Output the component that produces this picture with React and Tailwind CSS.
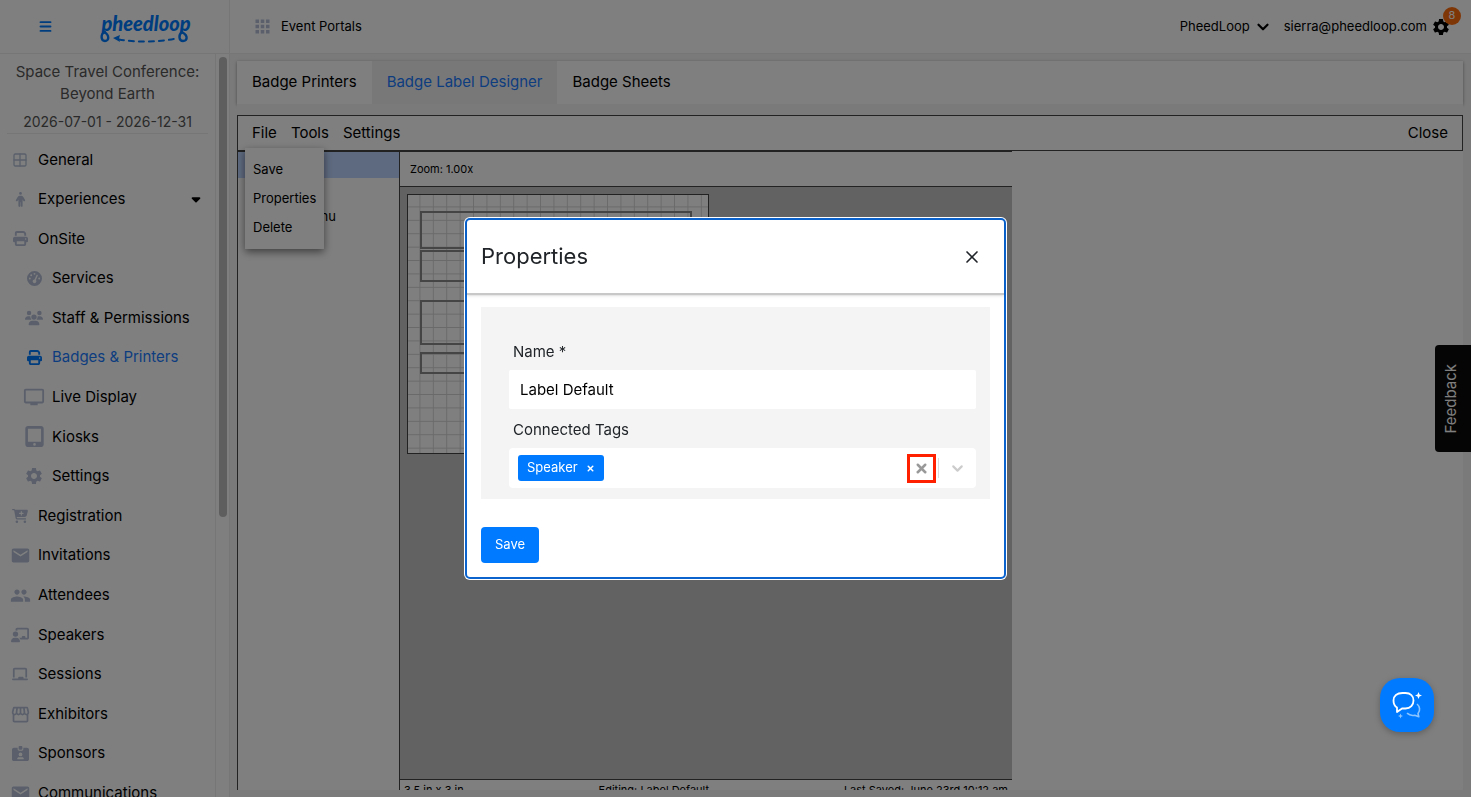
import React, { useState } from 'react';
import { Grid2x2, Menu, X } from 'lucide-react';
import {
  FaCaretDown,
  FaCartPlus,
  FaChalkboard,
  FaChalkboardUser,
  FaGaugeHigh,
  FaIdCardClip,
  FaPerson,
  FaPrint,
  FaTabletScreenButton,
  FaUsers,
} from 'react-icons/fa6';
import { MdApps, MdEmail, MdOutlineStorefront, MdOutlineTv, MdPeople, MdSettings } from 'react-icons/md';
import { FiChevronDown } from 'react-icons/fi';

const navItems = [
  { label: 'General', icon: Grid2x2, size: 16 },
  { label: 'Experiences', icon: FaPerson, size: 15, caret: true },
  { label: 'OnSite', icon: FaPrint, size: 15 },
  { label: 'Services', icon: FaGaugeHigh, size: 15, nested: true },
  { label: 'Staff & Permissions', icon: FaUsers, size: 18, nested: true },
  { label: 'Badges & Printers', icon: FaPrint, size: 15, nested: true, active: true },
  { label: 'Live Display', icon: MdOutlineTv, size: 22, nested: true },
  { label: 'Kiosks', icon: FaTabletScreenButton, size: 21, nested: true },
  { label: 'Settings', icon: MdSettings, size: 20, nested: true },
  { label: 'Registration', icon: FaCartPlus, size: 16 },
  { label: 'Invitations', icon: MdEmail, size: 21 },
  { label: 'Attendees', icon: MdPeople, size: 21 },
  { label: 'Speakers', icon: FaChalkboardUser, size: 18 },
  { label: 'Sessions', icon: FaChalkboard, size: 16 },
  { label: 'Exhibitors', icon: MdOutlineStorefront, size: 21 },
  { label: 'Sponsors', icon: FaIdCardClip, size: 17 },
  { label: 'Communications', icon: MdEmail, size: 21 },
];

const tabs = ['Badge Printers', 'Badge Label Designer', 'Badge Sheets'];

const Logo = () => (
  <svg width="92" height="34" viewBox="0 0 92 34" className="text-[#007bff]" aria-label="pheedloop">
    <text
      x="46"
      y="21"
      textAnchor="middle"
      fill="currentColor"
      className="font-[Lato,sans-serif] text-[20px] font-black italic"
    >
      pheedloop
    </text>
    <g fill="none" stroke="currentColor" strokeWidth="2.4" strokeLinecap="round">
      <path d="M5 22c-5 2-4 9 0 9s5-6-1-9" />
      <path d="M82 22c-4 3-3 9 1 9s6-5-1-9" />
      <path d="M19 29.500c18 3 38 2.500 55-.5" strokeWidth="2" strokeDasharray="5 5" />
    </g>
    <path d="M13 28l7-3-1 3.500 1 3.500z" fill="currentColor" />
  </svg>
);

const Header = () => (
  <header className="flex h-[54px] shrink-0 border-b border-[#ececec] bg-white">
    <div className="flex w-[230px] shrink-0 items-center border-r border-[#ececec] pl-[38px]">
      <button type="button" aria-label="Toggle menu" className="text-[#007bff]">
        <Menu size={15} strokeWidth={3} />
      </button>
      <a href="#home" className="ml-[47px]">
        <Logo />
      </a>
    </div>
    <div className="flex flex-1 items-center justify-between pr-5 pl-[22px] text-[13px]">
      <a href="#portals" className="flex items-center gap-2">
        <MdApps size={21} className="text-[#b4bfd6]" />
        Event Portals
      </a>
      <div className="flex items-center">
        <button type="button" className="flex items-center gap-1">
          PheedLoop
          <FiChevronDown size={18} strokeWidth={3} />
        </button>
        <a href="#account" className="ml-3">sierra@pheedloop.com</a>
        <button type="button" aria-label="Settings" className="relative ml-1">
          <MdSettings size={20} />
          <span className="absolute -top-[10px] -right-[10px] flex size-[18px] items-center justify-center rounded-full bg-[#ff6d0d] text-[11px] text-white">
            8
          </span>
        </button>
      </div>
    </div>
  </header>
);

const NavItem = ({ item }) => {
  const Icon = item.icon;
  return (
    <a
      href={`#${item.label}`}
      className={`flex items-center ${item.nested ? 'pl-[22px]' : 'pl-2'} ${
        item.active ? 'text-[#1a7bff]' : 'text-black'
      }`}
    >
      <span
        className={`flex w-6 justify-center ${item.active ? 'text-[#007bff]' : 'text-[#b4bfd6]'}`}
      >
        <Icon size={item.size} />
      </span>
      <span className="ml-[6px] flex-1">{item.label}</span>
      {item.caret && <FaCaretDown size={14} className="mr-3" />}
    </a>
  );
};

const Sidebar = () => (
  <aside className="flex w-[230px] shrink-0 overflow-hidden border-r border-[#ececec] bg-white">
    <div className="w-[216px] shrink-0 border-r border-[#ececec]">
      <div className="mx-[7px] border-b border-[#ececec] pt-[7px] text-center text-[#555]">
        <p className="text-[15px] leading-[22px]">Space Travel Conference: Beyond Earth</p>
        <p className="pt-[6px] text-[14px] leading-[22px]">2026-07-01 - 2026-12-31</p>
      </div>
      <nav className="mt-[6px] grid h-[673px] auto-rows-fr text-[15px]">
        {navItems.map((item) => (
          <NavItem key={item.label} item={item} />
        ))}
      </nav>
    </div>
    <div className="flex-1 pt-[3px] pl-[3px]">
      <div className="h-[460px] w-2 rounded-full bg-[#bdbdbd]" />
    </div>
  </aside>
);

const FileMenu = () => (
  <div className="absolute top-[32px] left-[7px] z-10 flex w-[79px] flex-col bg-white py-[7px] pl-2 text-[13px] leading-[29px] shadow-[0_3px_8px_rgba(0,0,0,0.5)]">
    <button type="button" className="text-left">Save</button>
    <button type="button" className="text-left">Properties</button>
    <button type="button" className="text-left">Delete</button>
  </div>
);

const LabelCanvas = () => (
  <svg width="302" height="260" className="block">
    <defs>
      <pattern id="grid" width="13.4" height="13.4" patternUnits="userSpaceOnUse">
        <path d="M13 0V13.400M0 13H13.400" stroke="#d4d4d4" fill="none" />
      </pattern>
    </defs>
    <rect width="302" height="260" fill="#fff" />
    <rect width="302" height="260" fill="url(#grid)" />
    <g fill="none" stroke="#8a8a8a" strokeWidth="2">
      <rect x="14" y="18" width="270" height="36" />
      <rect x="14" y="57" width="270" height="30" />
      <rect x="14" y="107" width="270" height="43" />
      <rect x="14" y="159" width="270" height="20" />
    </g>
    <rect x="0.5" y="0.5" width="301" height="259" fill="none" stroke="#444" />
  </svg>
);

const Designer = () => (
  <section className="mt-[11px] flex min-h-0 flex-1 flex-col overflow-hidden">
    <div className="relative flex h-9 shrink-0 items-center gap-[14px] border border-[#444] px-[14px] text-[15px]">
      <button type="button">File</button>
      <button type="button">Tools</button>
      <button type="button">Settings</button>
      <button type="button" className="ml-auto">Close</button>
      <FileMenu />
    </div>
    <div className="flex min-h-0 flex-1">
      <div className="w-[162px] shrink-0 border-l border-[#444] text-[13px]">
        <div className="h-[27px] border-t border-[#444] bg-[#bdd5ff]" />
        <p className="mt-7 text-center leading-5">Menu</p>
      </div>
      <div className="flex w-1/2 flex-col border-l border-[#444]">
        <div className="flex h-9 shrink-0 items-center border-t border-b border-[#444] pl-[10px] text-[11px]">
          Zoom: 1.00x
        </div>
        <div className="min-h-0 flex-1 bg-[#c4c4c4] pt-[7px] pl-[7px]">
          <LabelCanvas />
        </div>
        <div className="flex h-[11px] shrink-0 justify-between overflow-hidden border-t border-[#444] px-1 text-[11px] leading-5">
          <span>3.5 in x 3 in</span>
          <span>Editing: Label Default</span>
          <span>Last Saved: June 23rd 10:12 am</span>
        </div>
      </div>
    </div>
  </section>
);

const PropertiesModal = () => {
  const [name, setName] = useState('Label Default');

  return (
    <div
      role="dialog"
      aria-labelledby="modal-title"
      className="w-[541px] rounded-[5px] border-2 border-[#0b63ce] bg-white ring-1 ring-white"
    >
      <div className="flex h-[75px] items-center justify-between border-b-2 border-[#c8c8c8] px-[14px] shadow-sm">
        <h2 id="modal-title" className="text-[22px] text-[#212529]">Properties</h2>
        <button type="button" aria-label="Close" className="mr-2 text-[#212529]">
          <X size={20} strokeWidth={2} />
        </button>
      </div>
      <form className="px-[14px] pt-3 pb-[14px] text-[15px]" onSubmit={(e) => e.preventDefault()}>
        <div className="bg-[#f4f4f4] pt-[34px] pr-[14px] pb-[11px] pl-7">
          <label htmlFor="label-name" className="block pl-1 text-[#212529] leading-[22px]">Name *</label>
          <input
            id="label-name"
            value={name}
            onChange={(e) => setName(e.target.value)}
            className="mt-[7px] block h-[39px] w-full rounded-[2px] bg-white px-[11px] outline-none"
          />
          <label htmlFor="connected-tags" className="mt-[10px] block pl-1 text-[#212529] leading-[22px]">
            Connected Tags
          </label>
          <div className="mt-[7px] flex h-10 items-center rounded-[4px] bg-white pl-[9px]">
            <span className="flex h-[26px] items-center gap-2 rounded-[3px] bg-[#007bff] px-[9px] text-[13px] text-white">
              Speaker
              <button type="button" aria-label="Remove Speaker">
                <X size={9} strokeWidth={4} />
              </button>
            </span>
            <input id="connected-tags" className="min-w-0 flex-1 outline-none" />
            <button
              type="button"
              aria-label="Clear tags"
              className="flex size-[29px] items-center justify-center border-[3px] border-[#ff2000] text-[#999]"
            >
              <X size={15} strokeWidth={4} />
            </button>
            <span className="ml-[2px] h-5 w-px bg-[#ddd]" />
            <button type="button" aria-label="Open tags" className="mx-[10px] text-[#ccc]">
              <FiChevronDown size={17} strokeWidth={3} />
            </button>
          </div>
        </div>
        <button
          type="submit"
          className="mt-[28px] block h-9 rounded-[4px] bg-[#007bff] px-[14px] text-[13px] text-white"
        >
          Save
        </button>
      </form>
    </div>
  );
};

const ChatButton = () => (
  <button
    type="button"
    aria-label="Open chat"
    className="fixed right-[37px] bottom-[65px] z-30 flex size-[54px] items-center justify-center rounded-[20px] bg-[#007bff] shadow-[0_2px_6px_rgba(0,0,0,0.25)]"
  >
    <svg width="30" height="28" viewBox="0 0 30 28" fill="none">
      <path
        d="M10.500 2h3c5 0 8 3 8 7.500s-3 8-8 8h-3.500L5 21v-4.500C2.500 15 1.500 12.500 1.500 9.500 1.500 5 5 2 10.500 2z"
        stroke="#fff"
        strokeWidth="1.8"
        strokeLinejoin="round"
      />
      <path
        d="M25 13c3 2.500 3.500 6.500 1 9.500l.8 3.200-4-1.500c-3 .8-5.500 0-7.800-2"
        stroke="#8cc4ff"
        strokeWidth="1.600"
        strokeLinejoin="round"
      />
      <path d="M26.500 1l1 2.500 2.500 1-2.500 1-1 2.500-1-2.500-2.500-1 2.500-1z" fill="#fff" />
      <path d="M8.500 22.500l.7 1.800 1.800.7-1.800.7-.7 1.800-.7-1.800L6 25l1.800-.7z" fill="#8cc4ff" />
    </svg>
  </button>
);

const App = () => {
  const [activeTab, setActiveTab] = useState('Badge Label Designer');

  return (
    <div className="flex h-screen flex-col overflow-hidden bg-white font-[Inter,sans-serif] text-black">
      <Header />
      <div className="flex min-h-0 flex-1">
        <Sidebar />
        <main className="flex min-w-0 flex-1 flex-col bg-[#f4f4f4] py-[7px] pr-2 pl-[7px]">
          <div className="flex h-[43px] shrink-0 bg-white text-[15px] shadow-[0_1px_3px_rgba(0,0,0,0.4)]">
            {tabs.map((tab) => (
              <button
                key={tab}
                type="button"
                onClick={() => setActiveTab(tab)}
                className={`px-[15px] ${activeTab === tab ? 'bg-[#f0f0f0] text-[#1a7bff]' : ''}`}
              >
                {tab}
              </button>
            ))}
          </div>
          <div className="flex min-h-0 flex-1 flex-col bg-linear-to-b from-[#f4f4f4] from-[11px] to-white to-[11px]">
            <Designer />
          </div>
        </main>
      </div>

      <button
        type="button"
        className="fixed top-[345px] right-0 flex h-[107px] w-9 items-center justify-center rounded-l-[4px] bg-[#0b0b0b] pr-1 text-[15px] text-white"
      >
        <span className="rotate-180 [writing-mode:vertical-rl]">Feedback</span>
      </button>

      <div className="fixed inset-0 z-20 flex items-center justify-center bg-black/50">
        <PropertiesModal />
      </div>
      <ChatButton />
    </div>
  );
};

export default App;
